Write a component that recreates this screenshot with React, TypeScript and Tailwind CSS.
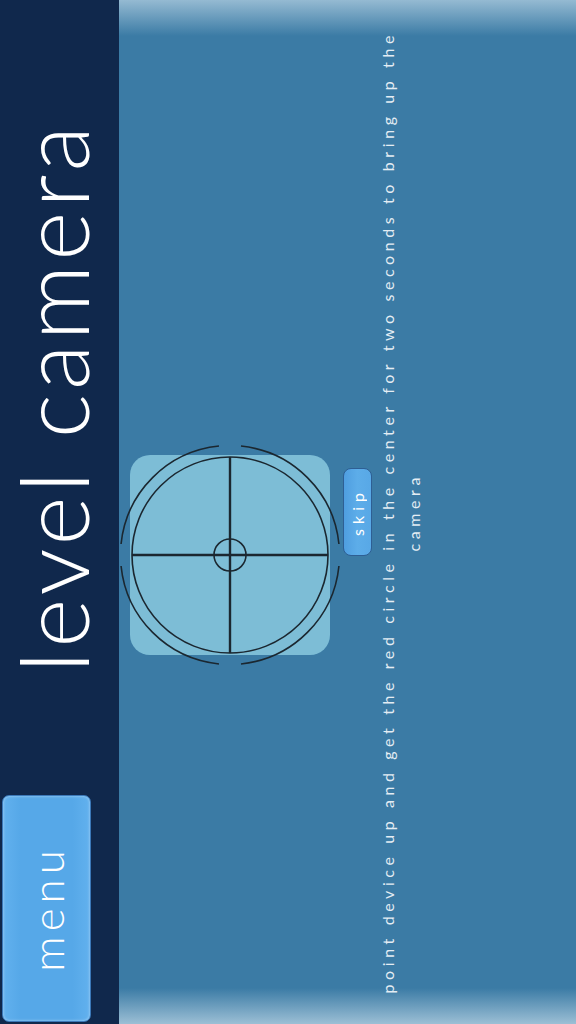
import React from "react";

const R = 109.5;
const a = 108.94;
const b = 11;
const c = 111;

function Crosshair() {
  return (
    <svg width="222" height="222" viewBox="0 0 222 222" className="block">
      <rect x="11" y="11" width="200" height="200" rx="20" fill="#7dbdd6" />
      <circle cx={c} cy={c} r="98" fill="none" stroke="#1b2730" strokeWidth="1.6" />
      <line x1="13" y1={c} x2="209" y2={c} stroke="#1b2730" strokeWidth="2.4" />
      <line x1={c} y1="13" x2={c} y2="209" stroke="#1b2730" strokeWidth="2.4" />
      <circle cx={c} cy={c} r="16" fill="none" stroke="#1b2730" strokeWidth="1.6" />
      <g fill="none" stroke="#1b2730" strokeWidth="1.6">
        <path d={`M ${c + a} ${c + b} A ${R} ${R} 0 0 1 ${c + b} ${c + a}`} />
        <path d={`M ${c - b} ${c + a} A ${R} ${R} 0 0 1 ${c - a} ${c + b}`} />
        <path d={`M ${c - a} ${c - b} A ${R} ${R} 0 0 1 ${c - b} ${c - a}`} />
        <path d={`M ${c + b} ${c - a} A ${R} ${R} 0 0 1 ${c + a} ${c - b}`} />
      </g>
    </svg>
  );
}

export default function App() {
  return (
    <div
      className="flex w-[576px] h-[1024px] overflow-hidden"
      style={{ fontFamily: "Lato, 'Open Sans', 'Noto Sans', sans-serif" }}
    >
      <div className="w-[119px] h-full bg-[#10284c] flex flex-col">
        <div className="flex-1 flex items-center justify-center pr-[14px]">
          <div className="[writing-mode:vertical-rl] rotate-180 text-white text-[94px] leading-[1.1] font-light tracking-[4px] whitespace-nowrap">
            level camera
          </div>
        </div>
        <button className="ml-[2px] mb-[2px] w-[89px] h-[227px] rounded-[7px] border border-[#3b78b8] bg-[linear-gradient(to_right,#62b1ee,#56a8e8_20%,#56a8e8_80%,#62b1ee)] shadow-[inset_0_0_3px_rgba(255,255,255,0.5)] flex items-center justify-center">
          <span className="[writing-mode:vertical-rl] rotate-180 text-white text-[44px] leading-none font-light tracking-[5px]">
            menu
          </span>
        </button>
      </div>
      <div className="flex-1 h-full flex items-center bg-[linear-gradient(to_bottom,#95bad2_0px,#3b7ba5_36px,#3b7ba5_988px,#9cbfd5_1024px)]">
        <div className="mt-[86px] shrink-0">
          <Crosshair />
        </div>
        <button className="ml-[2px] shrink-0 w-[29px] h-[88px] rounded-[8px] border border-[#2e5f94] bg-[linear-gradient(to_right,#4f9ee0,#5dade9_50%,#58a8e6)] flex items-center justify-center">
          <span className="[writing-mode:vertical-rl] rotate-180 text-white text-[16px] leading-none tracking-[5px]">
            skip
          </span>
        </button>
        <div className="ml-[3px] shrink-0 [writing-mode:vertical-rl] rotate-180 text-[#e4edf4] text-[16px] leading-[26px] tracking-[4.6px] text-center whitespace-nowrap">
          point device up and get the red circle in the center for two seconds to bring up the
          <br />
          camera
        </div>
      </div>
    </div>
  );
}
